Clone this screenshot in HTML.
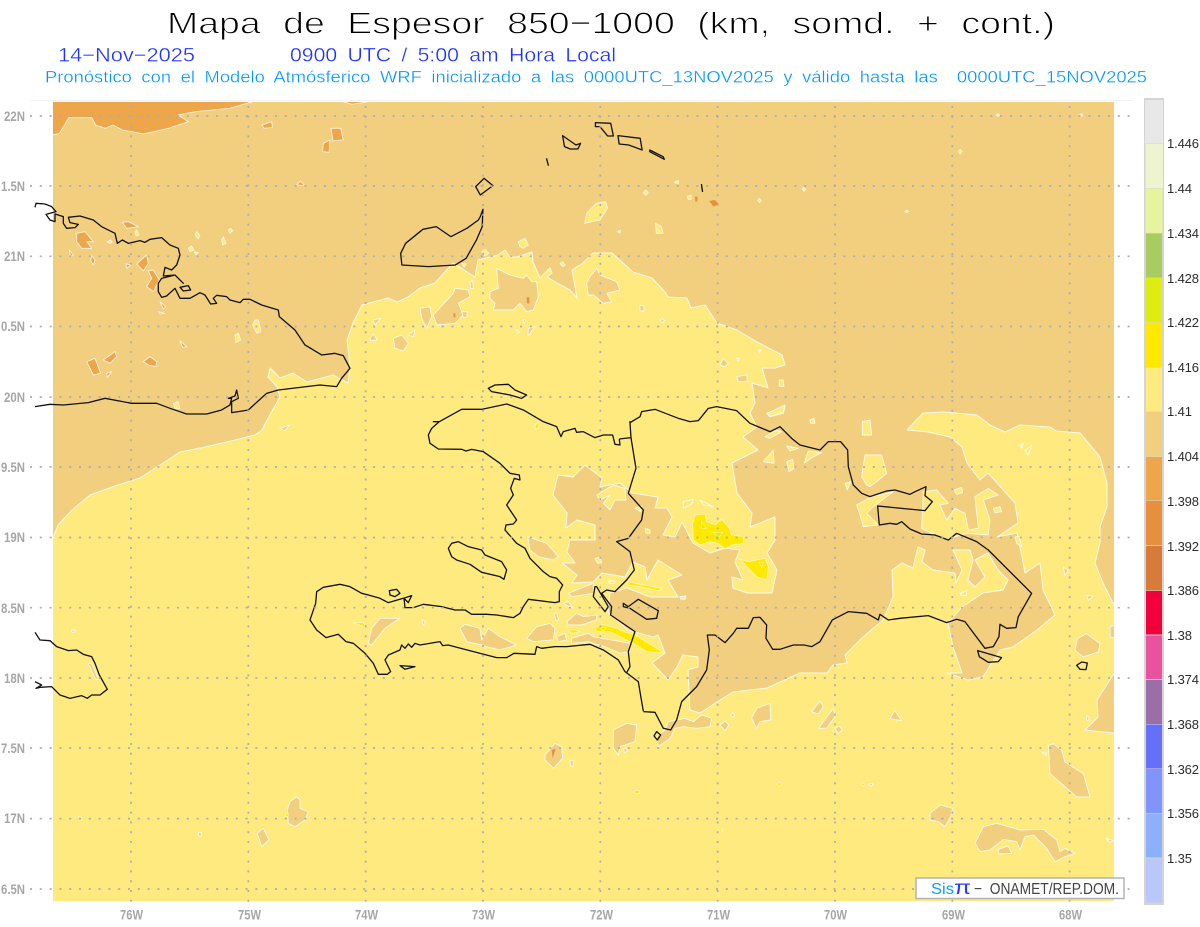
<!DOCTYPE html>
<html><head><meta charset="utf-8"><title>Mapa de Espesor</title>
<style>
html,body{margin:0;padding:0;background:#fff}
svg{display:block}
.nss *{vector-effect:non-scaling-stroke}
text{font-family:"Liberation Sans",sans-serif}
.t1{stroke:#fff;stroke-width:.9;word-spacing:10px}
.t2{stroke:#fff;stroke-width:.3;word-spacing:4px}
.lat,.lon{fill:#a6a6a6;font-weight:bold;font-size:14px}
.cb{fill:#2c2c2c;font-size:13px}
</style></head><body>
<svg width="1200" height="927" viewBox="0 0 1200 927" xmlns="http://www.w3.org/2000/svg">
<defs><clipPath id="c"><rect x="53" y="102" width="1061" height="799"/></clipPath></defs>
<rect width="1200" height="927" fill="#fff"/>
<line x1="30" x2="1133" y1="100.5" y2="100.5" stroke="#f2f2f2"/>

<g clip-path="url(#c)" class="nss">
<rect x="53" y="102" width="1061" height="799" fill="#f2cf7e"/>
<g fill="#eda64a" stroke="#fff" stroke-opacity=".8" stroke-width=".9" stroke-linejoin="round">
<g transform="scale(.3827,.3333)">
<polygon points="120,300 120,408 139,405 155,400 180,353 240,353 250,375 275,385 295,375 320,390 375,402 440,385 492,365 465,345 510,335 600,325 675,300"/>
<polygon points="880,300 920,313 990,300"/>
<polygon points="685,375 710,365 712,382 690,385"/>
<polygon points="865,385 890,385 897,420 870,423"/>
<polygon points="843,455 845,430 862,420 860,457"/>
<polygon points="775,555 785,543 795,557"/>
</g>
<g transform="translate(0,190) scale(.3333)">
<polygon points="230,130 255,125 280,155 260,155 275,175 245,175 230,155"/>
<polygon points="367,97 385,95 415,110 380,115"/>
<polygon points="208,180 220,195 212,200"/>
<polygon points="275,197 285,210 280,225 272,212"/>
<polygon points="410,222 440,195 445,220 430,243"/>
<polygon points="445,243 460,240 478,270 460,305 440,290 455,265"/>
<polygon points="378,222 393,225 380,235"/>
<polygon points="480,335 497,350 490,357"/>
<polygon points="475,365 493,370 480,372"/>
<polygon points="540,452 560,470 548,472"/>
<polygon points="260,515 285,505 302,550 280,555"/>
<polygon points="310,510 345,485 350,500 330,520"/>
<polygon points="430,515 450,500 470,515 468,530 445,525"/>
<polygon points="320,550 335,545 322,562"/>
</g>
</g>
<!-- tiny yellow specks on the tan -->
<g fill="#ffea80" stroke="#fff" stroke-opacity=".8" stroke-width=".8" stroke-linejoin="round">
<g transform="translate(0,190) scale(.3333)">
<polygon points="590,125 600,135 595,147 585,135"/>
<polygon points="665,150 670,140 678,160 668,165"/>
<polygon points="685,120 692,115 698,122 690,130"/>
<polygon points="565,175 575,168 582,180 570,185"/>
<polygon points="583,185 595,188 588,195"/>
<polygon points="405,125 410,120 417,135 408,138"/>
<polygon points="765,390 775,390 783,425 770,430 758,405"/>
<polygon points="705,435 715,430 722,450 708,458"/>
<polygon points="520,640 535,635 540,655 525,655"/>
<polygon points="322,155 332,150 337,158 328,160"/>
</g>
<g transform="translate(600,0) scale(.3827,.3333)">
<polygon points="-10,610 15,605 20,625 0,660 -40,670 -35,640"/>
<polygon points="145,670 160,680 165,700 147,700"/>
<polygon points="113,578 120,570 126,578 119,586"/>
<polygon points="195,545 205,542 205,550 197,550"/>
<polygon points="228,590 238,585 238,598 230,598"/>
<polygon points="936,455 941,448 946,455 941,462"/>
<polygon points="412,602 417,595 421,602 417,608"/>
<polygon points="1035,345 1040,341 1044,345 1040,350"/>
<polygon points="1253,345 1258,341 1262,345 1258,350"/>
<polygon points="528,568 533,562 537,568 533,574"/>
<polygon points="797,634 802,630 806,634 802,639"/>
<polygon points="46,695 54,690 52,700"/>
</g>
<g transform="translate(340,240) scale(.3333)">
<polygon points="535,5 555,-5 565,15 550,25 540,20"/>
<polygon points="425,35 435,28 447,40 435,48"/>
<polygon points="660,70 668,65 675,75 668,80"/>
</g>
</g>

<!-- main yellow -->
<polygon fill="#ffea80" stroke="#fff" stroke-opacity=".85" stroke-width="1" stroke-linejoin="round" points="40,915 40,545 53,538 58,525 72,510 90,495 115,486 140,478 160,465 180,452 205,447 235,440 255,435 262,430 267,420 280,397 277,387 268,377 270,368 280,378 293,373 307,382 333,375 348,383 350,367 347,340 353,323 362,305 373,302 388,298 397,302 408,297 420,288 435,283 453,263 475,277 478,260 498,255 505,250 510,257 517,257 532,252 533,262 540,278 550,268 552,273 547,277 557,283 570,290 577,298 572,270 583,263 593,253 612,253 633,272 652,278 665,292 668,297 687,298 691,308 705,305 717,323 737,330 757,342 782,355 785,365 775,368 762,368 768,388 752,383 755,403 750,413 757,427 907,430 923,413 945,412 977,415 990,425 1005,432 1020,425 1050,427 1056,431 1080,433 1100,457 1107,483 1107,507 1100,527 1100,543 1095,563 1103,583 1113,603 1125,605 1125,670 1113,675 1097,700 1098,717 1085,730 1113,733 1125,735 1125,915"/>
<!-- central tan -->
<polygon fill="#f2cf7e" points="757,427 743,437 758,450 732,463 737,493 752,513 750,527 775,517 775,540 767,553 777,570 772,593 747,593 733,588 732,577 743,580 735,562 740,550 725,548 710,553 693,543 682,522 675,537 663,535 672,517 667,508 655,508 658,497 632,493 620,483 600,487 602,478 585,465 573,477 558,475 553,495 567,513 566,528 577,520 595,525 595,540 570,540 567,552 575,563 562,563 577,575 572,583 593,582 602,573 625,577 633,562 645,567 647,580 658,560 682,575 668,580 678,597 650,597 627,588 610,593 608,612 628,630 653,637 658,635 665,653 652,663 668,680 677,667 683,655 698,657 698,667 688,670 690,710 700,713 717,702 733,692 767,688 800,673 827,673 833,665 847,663 845,655 863,637 883,620 893,597 892,570 902,563 913,568 918,547 925,550 922,562 933,570 955,573 956,583 962,570 953,550 970,550 973,560 968,580 975,587 985,577 975,560 988,553 998,570 1008,580 1003,590 983,593 962,607 948,623 953,647 962,673 947,673 968,680 983,677 1000,650 1013,647 1037,630 1055,615 1043,590 1040,563 1025,573 1022,557 1017,533 997,537 1018,523 1015,503 988,473 980,480 967,463 962,447 950,437 928,432 907,430 900,400 770,400"/>
<polyline fill="none" stroke="#fff" stroke-opacity=".85" stroke-width="1" stroke-linejoin="round" points="757,427 743,437 758,450 732,463 737,493 752,513 750,527 775,517 775,540 767,553 777,570 772,593 747,593 733,588 732,577 743,580 735,562 740,550 725,548 710,553 693,543 682,522 675,537 663,535 672,517 667,508 655,508 658,497 632,493 620,483 600,487 602,478 585,465 573,477 558,475 553,495 567,513 566,528 577,520 595,525 595,540 570,540 567,552 575,563 562,563 577,575 572,583 593,582 602,573 625,577 633,562 645,567 647,580 658,560 682,575 668,580 678,597 650,597 627,588 610,593 608,612 628,630 653,637 658,635 665,653 652,663 668,680 677,667 683,655 698,657 698,667 688,670 690,710 700,713 717,702 733,692 767,688 800,673 827,673 833,665 847,663 845,655 863,637 883,620 893,597 892,570 902,563 913,568 918,547 925,550 922,562 933,570 955,573 956,583 962,570 953,550 970,550 973,560 968,580 975,587 985,577 975,560 988,553 998,570 1008,580 1003,590 983,593 962,607 948,623 953,647 962,673 947,673 968,680 983,677 1000,650 1013,647 1037,630 1055,615 1043,590 1040,563 1025,573 1022,557 1017,533 997,537 1018,523 1015,503 988,473 980,480 967,463 962,447 950,437 928,432 907,430"/>

<!-- yellow holes in tan -->
<g fill="#ffea80" stroke="#fff" stroke-opacity=".85" stroke-width=".9" stroke-linejoin="round">
<g transform="translate(600,380) scale(.3333)">
<polygon points="770,375 815,350 880,335 820,380 800,400 835,435 790,440 780,405"/>
<polygon points="970,335 1010,330 1045,370 1020,375 1040,420 1065,385 1095,400 1105,450 1135,445 1125,350 1165,325 1195,345 1150,360 1170,420 1165,465 1100,460 1040,478 1000,462 965,445"/>
<polygon points="795,225 845,225 860,280 830,305 810,320 800,315 785,290"/>
<polygon points="500,100 555,80 550,100 510,110"/>
<polygon points="787,125 810,120 815,165 787,165"/>
<polygon points="490,245 520,210 522,250"/>
<polygon points="560,245 578,238 582,265 567,275"/>
<polygon points="613,250 625,213 665,218 632,235"/>
<polygon points="560,198 595,205 570,213"/>
<polygon points="495,170 530,150 545,155 510,175"/>
<polygon points="250,375 280,358 275,370 250,385"/>
<polygon points="300,360 340,380 310,375"/>
<polygon points="735,310 752,305 742,330"/>
<polygon points="1063,330 1085,322 1088,338 1070,343"/>
<polygon points="1180,385 1200,380 1205,395 1185,398"/>
<polygon points="1245,470 1258,470 1265,500 1250,490"/>
<polygon points="1275,210 1295,198 1285,225"/>
<polygon points="1080,640 1100,632 1100,647 1085,647"/>
<polygon points="630,120 642,115 645,130 632,130"/>
<polygon points="240,650 257,648 255,658 242,657"/>
<polygon points="135,445 150,450 150,460 138,460"/>
<polygon points="1260,195 1270,190 1265,205"/>
</g>
<g transform="translate(300,380) scale(.3333)">
<polygon points="890,345 940,315 975,325 978,360 945,360 930,390 910,370 930,345 900,360"/>
<polygon points="1150,365 1180,358 1175,372 1150,385"/>
<polygon points="1005,385 1025,378 1022,395"/>
<polygon points="885,535 900,532 905,548 893,550"/>
<polygon points="925,603 945,603 945,610 928,610"/>
<polygon points="1140,650 1158,650 1155,657 1142,657"/>
</g>
<g transform="translate(340,240) scale(.3333)">
<polygon points="1283,520 1335,495 1330,515 1290,530"/>
<polygon points="1318,420 1330,420 1332,440 1318,438"/>
<polygon points="365,70 378,72 372,82"/>
<polygon points="1255,330 1263,330 1258,340"/>
</g>
</g>

<!-- tan blobs in yellow -->
<g fill="#f2cf7e" stroke="#fff" stroke-opacity=".85" stroke-width=".9" stroke-linejoin="round">
<g transform="translate(300,380) scale(.3333)">
<polygon points="205,790 215,745 240,715 300,715 255,745 215,795"/>
<polygon points="480,745 495,733 540,745 545,780 565,745 600,770 650,795 600,810 560,800 545,795 500,785"/>
<polygon points="680,775 710,740 750,730 765,745 760,780 700,785"/>
<polygon points="683,470 740,490 775,530 760,540 715,530 690,510"/>
<polygon points="805,640 880,610 880,640 815,650"/>
<polygon points="770,770 795,760 800,780 775,785"/>
<polygon points="800,725 830,700 850,710 890,705 890,720 845,735 805,735"/>
<polygon points="790,670 805,665 820,685"/>
<polygon points="815,775 865,760 880,770 990,790 985,815 960,820 915,800 865,785 815,790"/>
<polygon points="762,700 770,700 776,720 768,722"/>
<polygon points="365,718 375,725 375,738 368,730"/>
</g>
<g transform="translate(340,240) scale(.3333)">
<polygon points="280,225 340,160 345,145 385,150 390,170 355,190 370,225 345,250 290,255"/>
<polygon points="240,205 270,200 275,230 260,265 245,235"/>
<polygon points="450,155 475,145 470,85 510,105 550,115 560,105 575,125 590,125 595,170 580,210 560,215 540,190 520,210 460,210 465,190 450,175"/>
<polygon points="740,130 750,110 770,85 780,105 830,125 840,150 800,160 815,185 790,190 760,165 745,165"/>
<polygon points="160,295 185,285 205,310 190,333 165,325"/>
<polygon points="205,285 225,270 220,290"/>
<polygon points="100,240 122,235 105,255"/>
<polygon points="90,295 100,282 112,300 92,302"/>
<polygon points="365,215 382,215 380,232 370,232"/>
<polygon points="390,125 398,122 400,145 392,145"/>
<polygon points="1140,375 1150,355 1165,370 1155,380"/>
<polygon points="1190,410 1220,405 1222,425 1195,425"/>
<polygon points="1190,355 1198,355 1195,363"/>
<polygon points="900,195 912,198 912,213 900,213"/>
<polygon points="960,240 967,235 973,242 967,248"/>
<polygon points="565,265 585,260 570,280 563,288"/>
<polygon points="530,270 540,275 533,280"/>
<polygon points="550,238 558,240 552,250"/>
</g>
<g transform="translate(1000,507) scale(.3333)">
<polygon points="190,180 205,190 195,205"/>
<polygon points="260,265 280,268 265,280"/>
<polygon points="232,395 260,380 300,410 295,435 250,450 225,430"/>
<polygon points="330,360 345,355 345,392 330,390"/>
<polygon points="145,715 160,710 185,730 195,765 250,800 270,870 230,870 150,800"/>
<polygon points="126,738 138,735 138,743"/>
<polygon points="260,625 268,632 264,642 260,638"/>
</g>
<g transform="translate(900,780) scale(.3333)">
<polygon points="90,100 120,75 158,85 150,115 135,140 115,125 90,120"/>
<polygon points="225,190 250,140 290,130 360,150 430,148 470,180 480,215 495,205 525,220 495,230 465,245 440,205 400,165 375,170 360,210 350,185 310,178 270,210 240,215"/>
<polygon points="295,208 325,198 335,220 295,222"/>
<polygon points="618,175 640,182 630,187"/>
</g>
<g transform="translate(540,690) scale(.3333)">
<polygon points="220,120 260,100 290,105 285,155 240,170 235,195 220,175"/>
<polygon points="15,195 45,160 65,170 68,205 40,235 15,210"/>
<polygon points="90,212 100,212 100,228 92,228"/>
<polygon points="385,95 435,85 460,95 485,75 515,85 510,110 470,115 430,110 405,115 390,145 355,170 350,140 375,120"/>
<polygon points="540,105 555,93 567,105 555,122"/>
<polygon points="635,85 650,55 690,40 692,90 660,95 650,115"/>
<polygon points="815,65 840,33 850,50 835,72"/>
<polygon points="835,115 880,55 885,80 860,115"/>
<polygon points="885,115 898,108 907,120 895,130"/>
<polygon points="1050,85 1065,62 1085,92 1060,88"/>
<polygon points="985,282 1000,280 993,290"/>
<polygon points="572,75 578,68 584,75 578,82"/>
<polygon points="250,178 258,174 262,182 255,190"/>
</g>
<g transform="translate(0,620) scale(.3333)">
<polygon points="265,130 275,130 295,178 287,178"/>
<polygon points="862,570 870,545 890,530 900,540 900,565 925,575 915,600 885,620 865,610"/>
<polygon points="772,640 790,625 807,660 785,680"/>
<polygon points="215,30 225,30 225,37 216,37"/>
<polygon points="595,638 604,638 604,648 596,648"/>
<polygon points="236,590 244,592 240,600"/>
</g>
<g transform="translate(0,190) scale(.3333)">
<polygon points="840,715 870,705 855,722"/>
</g>
</g>

<!-- orange inside blobs -->
<g fill="#e68f3c">
<g transform="translate(340,240) scale(.3333)"><polygon points="340,220 346,220 346,232 341,232"/><polygon points="560,172 568,172 568,190 561,190"/></g>
<g transform="translate(540,690) scale(.3333)"><polygon points="35,180 47,176 42,192 38,205"/></g>
<g transform="translate(600,0) scale(.3827,.3333)"><polygon points="248,590 255,590 254,605 249,605"/><polygon points="285,603 300,600 310,612 297,620"/></g>
</g>

<!-- bright yellow -->
<g fill="#ffe900" stroke="#fff" stroke-opacity=".6" stroke-width=".8" stroke-linejoin="round">
<g transform="translate(600,380) scale(.3333)">
<polygon points="285,405 315,402 320,425 345,435 365,418 385,440 395,465 430,470 430,490 395,495 375,507 355,490 330,485 300,495 280,480 278,430"/>
<polygon points="420,538 445,545 495,535 505,560 500,600 470,590 450,570"/>
<polygon points="80,605 130,615 185,625 175,632 120,620 85,615"/>
</g>
<g transform="translate(300,380) scale(.3333)">
<polygon points="885,745 905,733 950,745 970,755 1005,765 1095,820 1040,815 1000,790 960,770 930,755 890,755"/>
<polygon points="805,750 825,750 840,755 815,760"/>
<polygon points="160,728 190,728 197,742"/>
<polygon points="705,135 715,128 716,145 705,148"/>
</g>
<g transform="translate(540,690) scale(.3333)">
<polygon points="283,303 298,301 298,310 285,310"/>
<polygon points="535,420 550,420 540,427"/>
<polygon points="712,282 718,276 724,282 718,290"/>
<polygon points="965,282 970,277 974,285 969,288"/>
</g>
<g transform="translate(0,620) scale(.3333)"><polygon points="856,582 865,580 864,590 858,590"/></g>
<g transform="translate(340,240) scale(.3333)"><polygon points="585,555 597,548 596,563 586,568"/></g>
</g>
<g fill="#e0ec10" stroke="#fff" stroke-opacity=".6" stroke-width=".6">
<g transform="translate(600,380) scale(.3333)">
<polygon points="305,425 318,445 303,445"/>
<polygon points="340,457 368,457 355,473"/>
<polygon points="478,547 490,547 485,562"/>
</g>
<g transform="translate(300,380) scale(.3333)"><polygon points="900,742 920,742 910,752"/></g>
</g>
</g>

<!-- coast -->
<g class="nss" fill="none" stroke="#111" stroke-width="1.3" stroke-linejoin="round">
<g transform="translate(300,380) scale(.3333)">
<polyline points="958,177 960,195 945,193 938,165 910,165 885,173 850,155 830,157 825,145 790,155 783,170 770,140 730,125 670,90 620,72 545,88 485,88 418,125 400,125 418,125 395,145 385,165 390,190 415,207 485,208 498,213 515,208 550,215 600,250 630,280 658,285 660,300 643,295 632,325 640,345 620,375 650,420 640,432 618,435 615,450 650,490 675,505 690,535 730,575 750,590 770,595 788,615 778,635 778,665 765,668 685,658 670,680 660,700 640,713 590,705 560,703 515,703 495,690 465,690 425,680 370,673 340,683 315,683 312,655 325,668 335,647 310,655 265,668 240,655 205,645 185,640 150,620 120,613 70,622 50,635 47,670 30,720 50,750 78,773 115,763 138,785 160,790 195,820 220,850 235,883 262,883 272,875 255,840 265,825 300,810 305,795 315,805 325,792 335,802 345,790 360,795 420,785 428,797 445,795 490,807 590,833 620,833 642,820 705,823 710,800 725,805 765,800 800,800 870,793 910,810 955,840 975,875 1015,905 1020,935 1030,993"/>
<polyline points="958,177 993,173 990,125 993,173 1008,265 985,340 1030,390 1025,420 985,475 950,485 990,515 1003,570 980,600 945,635 920,630 905,640 935,680 932,705 1005,755 985,815 990,860 980,878"/>
<polygon points="885,620 880,650 915,695 925,680 890,620"/>
<polygon points="970,670 985,680 1015,658 1075,692 1070,715 1040,718 990,685 970,680"/>
<polygon points="565,25 585,15 625,13 645,30 680,45 665,55 630,45 575,35"/>
<polygon points="445,505 455,490 475,485 505,500 545,510 555,525 605,545 620,570 612,598 600,590 545,577 510,553 470,540 455,530"/>
<polygon points="300,857 345,860 315,868"/>
<polygon points="268,632 290,628 300,640 285,650 270,645"/>
</g>
<g transform="translate(600,380) scale(.3333)">
<polyline points="130,995 165,997 190,1045 212,1050 230,1020 245,965 290,920 320,870 328,810 322,765 345,765 375,788 400,760 410,745 445,745 460,713 480,712 500,735 498,775 518,808 540,808 580,795 612,795 635,800 660,785 697,720 745,695 800,700 835,720 840,703 865,720 900,715 985,707 1040,728 1070,718 1095,725 1125,765 1155,805 1180,800 1197,770 1200,733 1220,745 1248,743 1255,710 1295,640 1165,510 1130,485 1070,460 1045,480 1005,465 965,462 930,447 905,425 890,433 870,430 838,435 833,378 975,392 997,365 975,347 978,320 945,335 930,343 885,330 860,333 810,350 785,340 760,315 745,260 743,210 722,185 685,185 660,210 600,195 575,175 540,140 510,155 450,130 410,92 350,80 325,85 295,122 270,125 235,115 165,88 125,95 120,110 90,128"/>
<polygon points="1133,812 1205,833 1195,845 1165,847 1138,830"/>
<polygon points="170,1055 182,1065 172,1080 162,1068"/>
</g>
<g transform="translate(1000,507) scale(.3333)"><polygon points="230,475 245,465 262,468 258,488 240,487"/></g>
<g transform="translate(0,190) scale(.3333)">
<polyline points="105,52 108,40 135,42 155,50 168,65 138,73 150,90 165,95 165,72 190,80 190,100 200,115 225,113 235,103 210,98 205,82 240,78 280,90 305,110 345,130 352,160 367,150 385,160 420,152 435,157 450,148 485,143 510,165 535,175 540,195 530,225 515,240 495,232 490,258 525,255 550,280 525,255 485,265 475,280 475,305 485,322 500,318 525,295 540,325 570,325 600,308 615,315 632,342 650,340 640,325 650,316 680,320 690,330 720,338 730,328 750,328 785,345 835,360 838,380 885,420 915,465 965,495 1005,490 1030,497 1050,535 1025,565 1010,590 960,585 835,600 800,610 745,660 715,665 695,668 695,635 715,625 710,600 705,618 685,625 695,625 690,645 665,660 620,672 560,672 510,655 470,640 395,640 315,625 265,638 190,645 150,643 105,650"/>
<polygon points="540,292 565,287 572,300 550,303"/>
</g>
<g transform="translate(0,620) scale(.3333)">
<polyline points="105,37 120,60 150,62 170,80 205,92 230,90 250,103 275,110 285,130 298,165 322,208 300,225 275,225 262,235 245,227 210,235 180,225 155,200 120,202 108,205 125,195 105,185"/>
</g>
<g transform="scale(.3827,.3333)">
<polygon points="1262,628 1255,650 1250,660 1220,685 1178,710 1140,680 1105,688 1060,730 1047,760 1050,795 1120,800 1190,795 1218,775 1245,720 1260,680"/>
<polygon points="1265,535 1288,557 1255,585 1243,560"/>
<polygon points="1470,407 1505,435 1517,430 1510,447 1490,447 1475,440"/>
<polyline points="1428,475 1433,497"/>
</g>
<g transform="translate(600,0) scale(.3827,.3333)">
<polygon points="-12,368 28,370 35,408 20,408 0,380 -12,380"/>
<polygon points="47,407 105,415 110,450 75,435 50,432"/>
<polygon points="130,450 165,470 168,478 130,455"/>
<polyline points="265,552 268,576"/>
</g>
</g>

<!-- grid -->
<g fill="none" stroke="#acacb2" stroke-width="1.7" stroke-dasharray="2 7.8">
<path d="M30 116H1136M30 186H1136M30 256.3H1136M30 326.5H1136M30 397H1136M30 467H1136M30 537.5H1136M30 607.7H1136M30 678H1136M30 748H1136M30 818.6H1136M30 889H1136"/>
<path d="M131 106V905M248.3 106V905M365.7 106V905M483 106V905M600.3 106V905M717.7 106V905M835 106V905M952.3 106V905M1069.7 106V905"/>
</g>

<!-- title -->
<text class="t1" x="167" y="33.500" font-size="31" fill="#000" textLength="888" lengthAdjust="spacingAndGlyphs">Mapa de Espesor 850−1000 (km, somd. + cont.)</text>
<text class="t2" x="58" y="61.500" font-size="19" fill="#1e32ff" textLength="137" lengthAdjust="spacingAndGlyphs">14−Nov−2025</text>
<text class="t2" x="290" y="61.500" font-size="19" fill="#1e32ff" textLength="326" lengthAdjust="spacingAndGlyphs">0900 UTC / 5:00 am Hora Local</text>
<text class="t2" x="45" y="82.500" font-size="16.500" fill="#0096ff" textLength="1102" lengthAdjust="spacingAndGlyphs" xml:space="preserve">Pronóstico con el Modelo Atmósferico WRF inicializado a las 0000UTC_13NOV2025 y válido hasta las  0000UTC_15NOV2025</text>

<!-- lat labels -->
<g class="lat">
<text x="4" y="121" textLength="21" lengthAdjust="spacingAndGlyphs">22N</text>
<text x="1" y="191" textLength="24" lengthAdjust="spacingAndGlyphs">1.5N</text>
<text x="4" y="261" textLength="21" lengthAdjust="spacingAndGlyphs">21N</text>
<text x="1" y="331" textLength="24" lengthAdjust="spacingAndGlyphs">0.5N</text>
<text x="4" y="402" textLength="21" lengthAdjust="spacingAndGlyphs">20N</text>
<text x="1" y="472" textLength="24" lengthAdjust="spacingAndGlyphs">9.5N</text>
<text x="4" y="542" textLength="21" lengthAdjust="spacingAndGlyphs">19N</text>
<text x="1" y="613" textLength="24" lengthAdjust="spacingAndGlyphs">8.5N</text>
<text x="4" y="683" textLength="21" lengthAdjust="spacingAndGlyphs">18N</text>
<text x="1" y="753" textLength="24" lengthAdjust="spacingAndGlyphs">7.5N</text>
<text x="4" y="823" textLength="21" lengthAdjust="spacingAndGlyphs">17N</text>
<text x="1" y="894" textLength="24" lengthAdjust="spacingAndGlyphs">6.5N</text>
</g>
<!-- lon labels -->
<g class="lon">
<text x="120" y="919.500" textLength="23" lengthAdjust="spacingAndGlyphs">76W</text>
<text x="238" y="919.500" textLength="23" lengthAdjust="spacingAndGlyphs">75W</text>
<text x="355" y="919.500" textLength="23" lengthAdjust="spacingAndGlyphs">74W</text>
<text x="472" y="919.500" textLength="23" lengthAdjust="spacingAndGlyphs">73W</text>
<text x="590" y="919.500" textLength="23" lengthAdjust="spacingAndGlyphs">72W</text>
<text x="707" y="919.500" textLength="23" lengthAdjust="spacingAndGlyphs">71W</text>
<text x="824" y="919.500" textLength="23" lengthAdjust="spacingAndGlyphs">70W</text>
<text x="942" y="919.500" textLength="23" lengthAdjust="spacingAndGlyphs">69W</text>
<text x="1059" y="919.500" textLength="23" lengthAdjust="spacingAndGlyphs">68W</text>
</g>

<!-- colorbar -->
<rect x="1144" y="98" width="20" height="807" fill="#d4d4d4"/>
<g>
<rect x="1145" y="100" width="18" height="43.5" fill="#e8e8e8"/>
<rect x="1145.5" y="144" width="17.5" height="44" fill="#eef4d0"/>
<rect x="1145.5" y="188.5" width="17" height="44.5" fill="#e6f4a0"/>
<rect x="1146" y="233.5" width="16" height="44" fill="#a9cc60"/>
<rect x="1146" y="278" width="16" height="44" fill="#e0ec10"/>
<rect x="1146" y="322.500" width="16" height="44.5" fill="#ffe900"/>
<rect x="1146" y="367.500" width="16" height="44" fill="#ffea80"/>
<rect x="1146" y="412" width="16" height="44.5" fill="#f2cf7e"/>
<rect x="1146" y="457" width="16" height="43.5" fill="#eda64a"/>
<rect x="1146" y="501" width="16" height="44" fill="#e68f3c"/>
<rect x="1146" y="546" width="16" height="44.5" fill="#d87a38"/>
<rect x="1146" y="591" width="16" height="43.5" fill="#f2003c"/>
<rect x="1146" y="635.500" width="16" height="43.5" fill="#ea52a0"/>
<rect x="1146" y="680" width="16" height="44" fill="#9b6ea8"/>
<rect x="1146" y="724.500" width="16" height="44" fill="#6470fa"/>
<rect x="1146" y="769" width="16" height="44" fill="#8094fc"/>
<rect x="1146" y="813.500" width="16" height="44" fill="#8cb0fc"/>
<rect x="1146" y="858.500" width="16" height="44" fill="#b8c8fc"/>
</g>
<g class="cb">
<text x="1167" y="148" textLength="32">1.446</text>
<text x="1167" y="193" textLength="25">1.44</text>
<text x="1167" y="238" textLength="32">1.434</text>
<text x="1167" y="283" textLength="32">1.428</text>
<text x="1167" y="327" textLength="32">1.422</text>
<text x="1167" y="372" textLength="32">1.416</text>
<text x="1167" y="416" textLength="25">1.41</text>
<text x="1167" y="461" textLength="32">1.404</text>
<text x="1167" y="506" textLength="32">1.398</text>
<text x="1167" y="551" textLength="32">1.392</text>
<text x="1167" y="595" textLength="32">1.386</text>
<text x="1167" y="640" textLength="25">1.38</text>
<text x="1167" y="684" textLength="32">1.374</text>
<text x="1167" y="729" textLength="32">1.368</text>
<text x="1167" y="774" textLength="32">1.362</text>
<text x="1167" y="818" textLength="32">1.356</text>
<text x="1167" y="863" textLength="25">1.35</text>
</g>

<!-- logo box -->
<rect x="916" y="878" width="208" height="20.500" fill="#fff" stroke="#b4b4b4" stroke-width="1.500"/>
<text x="931" y="894" font-size="16" fill="#0a9cff" textLength="23" lengthAdjust="spacingAndGlyphs">Sis</text>
<text x="954" y="894" font-size="19" fill="#2a3cff" textLength="17" lengthAdjust="spacingAndGlyphs">π</text>
<text x="974" y="894" font-size="16" fill="#444" textLength="145" lengthAdjust="spacingAndGlyphs" xml:space="preserve">−  ONAMET/REP.DOM.</text>
</svg>
</body></html>
